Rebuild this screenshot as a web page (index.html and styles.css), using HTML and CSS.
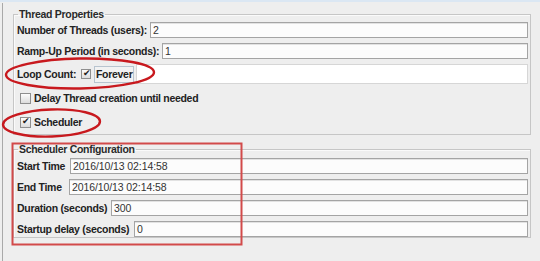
FILE: index.html
```html
<!doctype html>
<html lang="en">
<head>
  <meta charset="utf-8" />
  <title>Thread Group</title>
  <link rel="stylesheet" href="styles.css">
</head>
<body>
  <div class="screen">
    <fieldset class="group thread">
      <legend>Thread Properties</legend>
      <div class="row">
        <label class="lbl w-threads">Number of Threads (users):</label>
        <span class="field">2</span>
      </div>
      <div class="row">
        <label class="lbl w-ramp">Ramp-Up Period (in seconds):</label>
        <span class="field">1</span>
      </div>
      <div class="row loop">
        <label class="lbl w-loop">Loop Count:</label>
        <span class="check on"></span>
        <span class="forever">Forever</span>
        <span class="field flat"></span>
      </div>
      <div class="check-row">
        <span class="check"></span>
        <span class="lbl">Delay Thread creation until needed</span>
      </div>
      <div class="check-row">
        <span class="check on"></span>
        <span class="lbl">Scheduler</span>
      </div>
    </fieldset>

    <fieldset class="group sched">
      <legend>Scheduler Configuration</legend>
      <div class="row">
        <label class="lbl w-start">Start Time</label>
        <span class="field">2016/10/13 02:14:58</span>
      </div>
      <div class="row">
        <label class="lbl w-end">End Time</label>
        <span class="field">2016/10/13 02:14:58</span>
      </div>
      <div class="row">
        <label class="lbl w-dur">Duration (seconds)</label>
        <span class="field">300</span>
      </div>
      <div class="row">
        <label class="lbl w-delay">Startup delay (seconds)</label>
        <span class="field">0</span>
      </div>
    </fieldset>

    <!-- red annotations drawn over the form -->
    <svg class="marks" width="540" height="261" viewBox="0 0 540 261">
      <ellipse cx="80" cy="73.5" rx="74" ry="15" transform="rotate(-1 80 73.5)" />
      <ellipse cx="51.5" cy="123" rx="48.5" ry="13.5" transform="rotate(-2 51.5 123)" />
      <rect class="box" x="12.5" y="143.5" width="229" height="101" />
    </svg>
  </div>
</body>
</html>
```

FILE: styles.css
```css
html, body { margin:0; padding:0; }
body { background:#eeeeee; font-family:"Liberation Sans", Arial, sans-serif; font-size:10.5px; color:#222; }

.screen { position:relative; width:540px; height:261px; box-sizing:border-box; border-top:2px solid #dbe7f3; overflow:hidden; }
.screen::before { content:""; display:block; position:absolute; left:2px; top:1px; bottom:0; width:1px; background:#a9a9a9; }

.group { margin:0 9px 0 13px; padding:1px 2px 2px 2px; border:1px solid #c6c6c6; box-shadow:inset 1px 1px 0 #fafafa; }
.group legend { margin-left:2px; padding:0 1px; line-height:14px; font-weight:bold; letter-spacing:-0.3px; color:#2a2a2a; }
.thread { margin-top:5px; }
.sched { margin-top:7px; padding-top:2px; padding-bottom:0; }

.row { display:flex; align-items:center; height:16px; margin-bottom:5px; }
.row:last-child { margin-bottom:0; }
.lbl { font-weight:bold; white-space:nowrap; letter-spacing:-0.3px; }
.row .lbl { flex:none; padding-left:1px; }

.w-threads { width:133px; }
.w-ramp { width:145px; }
.w-loop { width:64px; }
.w-start { width:53px; }
.w-end { width:52px; }
.w-dur { width:94px; }
.w-delay { width:117px; }

.field { flex:1; height:16px; box-sizing:border-box; border:1px solid #a4a4a4; background:#fcfcfc; box-shadow:inset 0 1px 0 #e2e2e2; padding:0 2px; line-height:14px; letter-spacing:-0.1px; color:#333; }
.field.flat { height:20px; border-color:#d6d6d6; box-shadow:none; background:#fff; margin-left:2px; }

.loop { height:20px; margin-bottom:4px; }

.check { display:inline-block; flex:none; width:11px; height:11px; box-sizing:border-box; border:1px solid #8f8f8f; background:linear-gradient(#fdfdfd, #dcdcdc); position:relative; }
.check.on::after { content:"\2714"; position:absolute; left:1px; top:-2px; font-size:9px; color:#222; }
.loop .check { width:10px; height:10px; margin-right:3px; }

.forever { font-weight:bold; letter-spacing:-0.3px; border:1px solid #b8c4cf; padding:0 1px; line-height:15px; background:#f2f2f2; }

.check-row { display:flex; align-items:center; height:20px; margin-top:4px; padding-left:4px; gap:3px; }

.marks { position:absolute; left:0; top:-2px; pointer-events:none; }
.marks ellipse { fill:none; stroke:#c8191e; stroke-width:2.4; }
.marks .box { fill:none; stroke:#d24a4a; stroke-width:2; }
```
